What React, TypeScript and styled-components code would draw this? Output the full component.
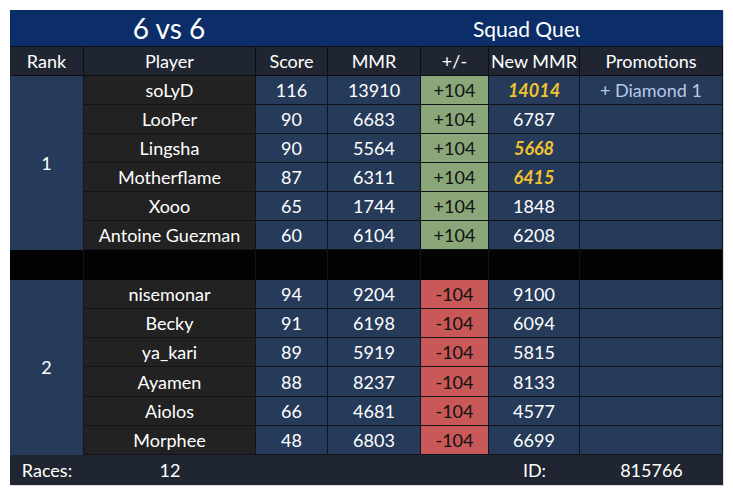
import * as React from 'react';
import styled, { createGlobalStyle } from 'styled-components';

type Player = {
	name: string;
	score: number;
	mmr: number;
	delta: number;
	newMmr: number;
	gold?: boolean;
	promo?: string;
};

const team1: Player[] = [
	{ name: 'soLyD', score: 116, mmr: 13910, delta: 104, newMmr: 14014, gold: true, promo: '+ Diamond 1' },
	{ name: 'LooPer', score: 90, mmr: 6683, delta: 104, newMmr: 6787 },
	{ name: 'Lingsha', score: 90, mmr: 5564, delta: 104, newMmr: 5668, gold: true },
	{ name: 'Motherflame', score: 87, mmr: 6311, delta: 104, newMmr: 6415, gold: true },
	{ name: 'Xooo', score: 65, mmr: 1744, delta: 104, newMmr: 1848 },
	{ name: 'Antoine Guezman', score: 60, mmr: 6104, delta: 104, newMmr: 6208 },
];

const team2: Player[] = [
	{ name: 'nisemonar', score: 94, mmr: 9204, delta: -104, newMmr: 9100 },
	{ name: 'Becky', score: 91, mmr: 6198, delta: -104, newMmr: 6094 },
	{ name: 'ya_kari', score: 89, mmr: 5919, delta: -104, newMmr: 5815 },
	{ name: 'Ayamen', score: 88, mmr: 8237, delta: -104, newMmr: 8133 },
	{ name: 'Aiolos', score: 66, mmr: 4681, delta: -104, newMmr: 4577 },
	{ name: 'Morphee', score: 48, mmr: 6803, delta: -104, newMmr: 6699 },
];

const headers = ['Rank', 'Player', 'Score', 'MMR', '+/-', 'New MMR', 'Promotions'];

const GlobalStyle = createGlobalStyle`
	body {
		margin: 0;
		padding: 10px;
		background: #ffffff;
		font-family: 'Lato', 'Liberation Sans', sans-serif;
	}
`;

// whole results card, one grid for title, table and footer
const Board = styled.div`
	width: 713px;
	display: grid;
	grid-template-columns: 74px 172px 72px 93px 68px 91px 143px;
	grid-template-rows: 36px 30px repeat(6, 29px) 30px repeat(6, 29.17px) 30px;
	box-shadow: 1px 1px 0 #d8dbe0;
	color: #ffffff;
	font-size: 18px;
`;

const Cell = styled.div<{ $bg?: string; $ink?: string }>`
	box-sizing: border-box;
	display: flex;
	align-items: center;
	justify-content: center;
	white-space: nowrap;
	background: ${(p) => p.$bg || '#263a5a'};
	color: ${(p) => p.$ink || '#ffffff'};
	border-right: 1px solid #111418;
	border-bottom: 1px solid #111418;
`;

const TitleLeft = styled.div`
	grid-column: 1 / 4;
	background: #0b2e69;
	display: flex;
	align-items: center;
	justify-content: center;
	font-size: 28px;
`;

// queue name is clipped at the promotions column, as in the source
const TitleRight = styled.div`
	grid-column: 4 / 7;
	background: #0b2e69;
	display: flex;
	align-items: center;
	padding-left: 145px;
	overflow: hidden;
	white-space: nowrap;
	font-size: 21px;
`;

const TitleEnd = styled.div`
	background: #0b2e69;
`;

const HeadCell = styled(Cell)`
	background: #1f2631;
	border: 1px solid #0c0e12;
	border-left: none;
	&:first-of-type {
		border-left: 1px solid #0c0e12;
	}
`;

const RankCell = styled(Cell)<{ $row: number }>`
	grid-row: ${(p) => p.$row} / span 6;
	background: #263a5a;
	border-bottom: none;
`;

const GoldValue = styled.span`
	color: #f2c22e;
	font-weight: 700;
	font-style: italic;
`;

const Promo = styled.span`
	color: #b6c8e8;
`;

const Spacer = styled.div`
	background: #030303;
	border-right: 1px solid #151515;
`;

const FooterCell = styled.div`
	background: #1f2631;
	display: flex;
	align-items: center;
	justify-content: center;
	white-space: nowrap;
`;

const PlayerRow: React.FC<{ p: Player }> = ({ p }) => (
	<>
		<Cell $bg="#222222">{p.name}</Cell>
		<Cell>{p.score}</Cell>
		<Cell>{p.mmr}</Cell>
		<Cell $bg={p.delta > 0 ? '#8ba779' : '#c95858'} $ink="#111111">
			{p.delta > 0 ? `+${p.delta}` : p.delta}
		</Cell>
		<Cell>{p.gold ? <GoldValue>{p.newMmr}</GoldValue> : p.newMmr}</Cell>
		<Cell>{p.promo && <Promo>{p.promo}</Promo>}</Cell>
	</>
);

const App: React.FC = () => {
	return (
		<>
			<GlobalStyle />
			<Board>
				<TitleLeft>6 vs 6</TitleLeft>
				<TitleRight>Squad Queue</TitleRight>
				<TitleEnd />
				{headers.map((h) => (
					<HeadCell key={h}>{h}</HeadCell>
				))}
				<RankCell $row={3}>1</RankCell>
				{team1.map((p) => (
					<PlayerRow key={p.name} p={p} />
				))}
				{headers.map((h) => (
					<Spacer key={`s-${h}`} />
				))}
				<RankCell $row={10}>2</RankCell>
				{team2.map((p) => (
					<PlayerRow key={p.name} p={p} />
				))}
				<FooterCell>Races:</FooterCell>
				<FooterCell>12</FooterCell>
				<FooterCell />
				<FooterCell />
				<FooterCell />
				<FooterCell>ID:</FooterCell>
				<FooterCell>815766</FooterCell>
			</Board>
		</>
	);
};

export default App;
